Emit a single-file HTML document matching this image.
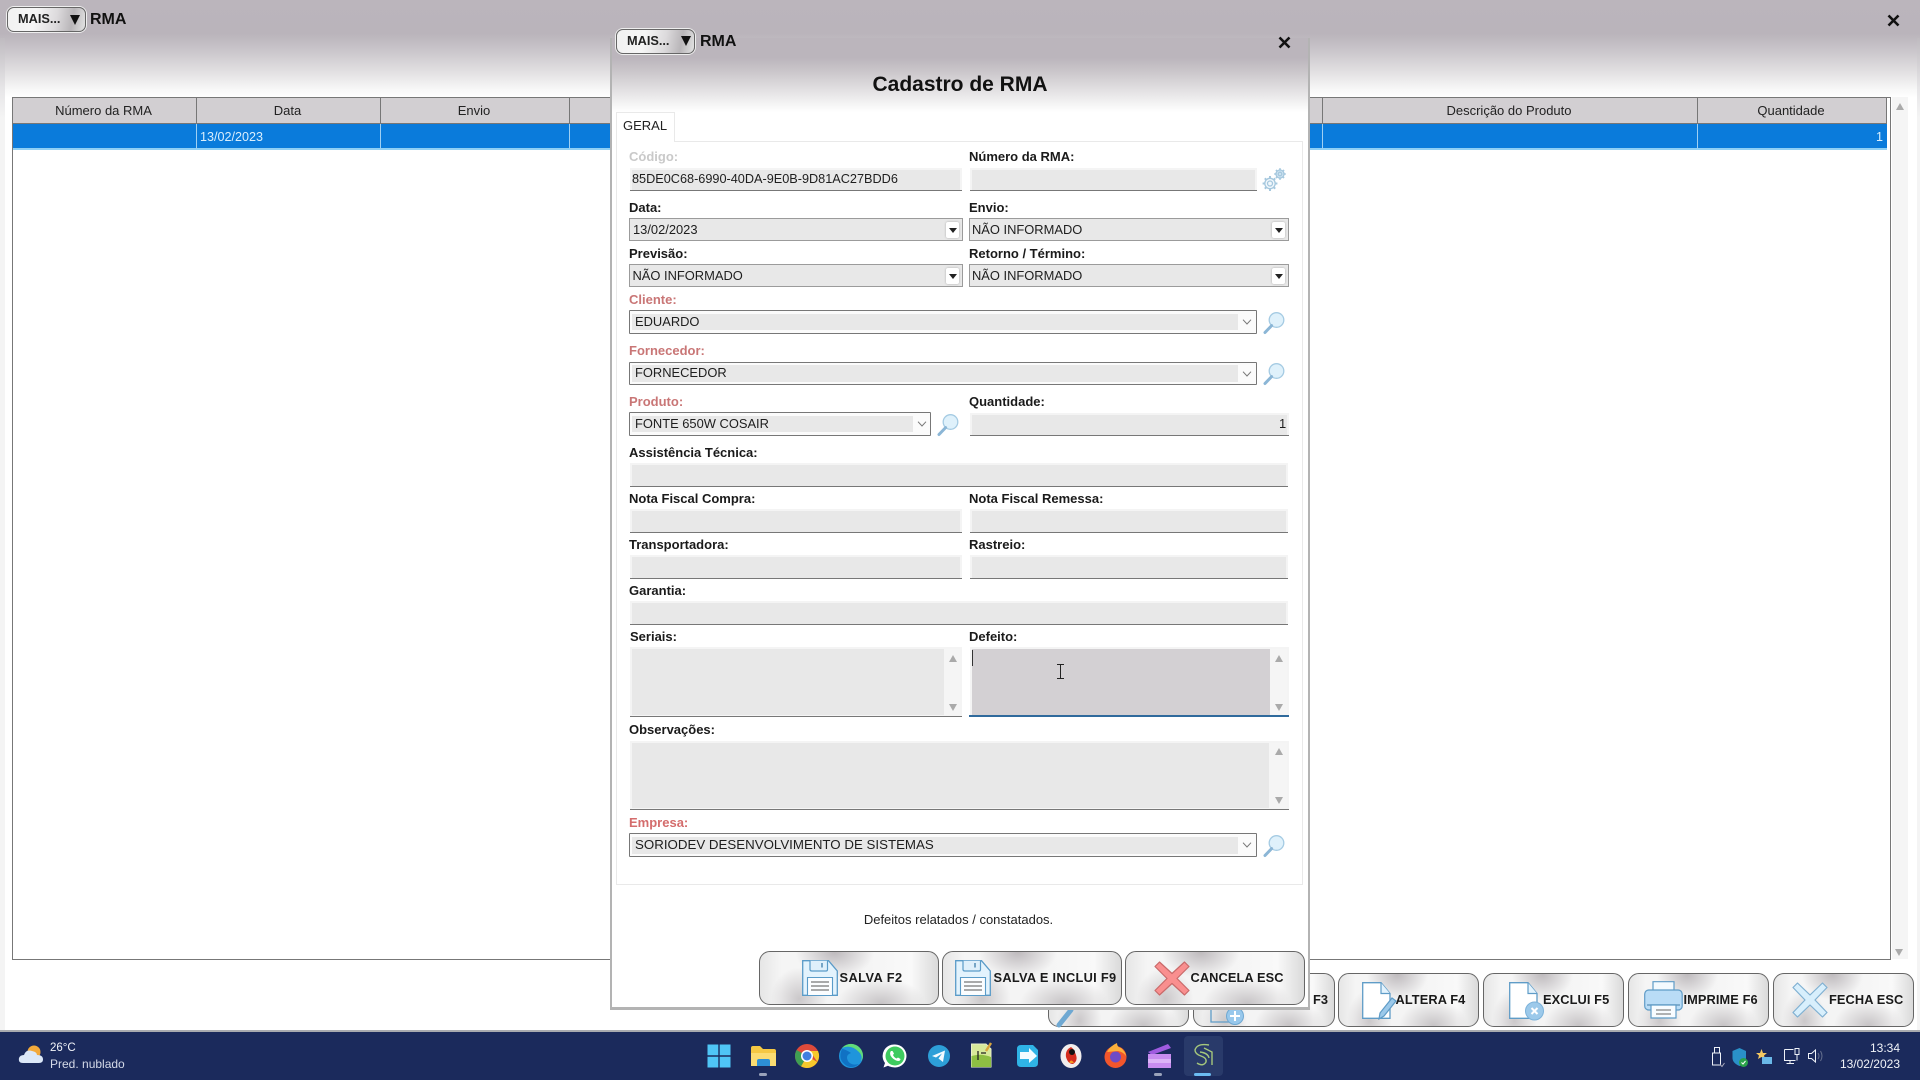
<!DOCTYPE html>
<html lang="pt-BR"><head><meta charset="utf-8"><title>RMA</title>
<style>
*{box-sizing:border-box}
html,body{margin:0;padding:0;width:1920px;height:1080px;overflow:hidden;background:#fff;font-family:"Liberation Sans",sans-serif;color:#111}
div,span{position:absolute}
svg{position:absolute;overflow:visible}
.bgtop{left:0;top:0;width:1920px;height:100px;background:linear-gradient(180deg,#bbb5bc 0,#bab4bb 34px,#c9c5ca 50px,#e2e0e2 72px,#f8f8f8 90px,#fff 98px)}
.side{top:38px;height:992px;background:linear-gradient(180deg,#bfbbc0,#e6e5e7 50px,#f4f4f4 80px)}
.more{border:1px solid #666;border-radius:7px;width:79px;height:25px;background:linear-gradient(100deg,#f1f1f1 0,#f6f6f6 35%,#dcdadc 62%,#b9b6b9 82%,#e3e3e3 100%);box-shadow:0 0 0 1px #eee}
.more b{position:absolute;left:10px;top:4px;font:bold 13px/14px "Liberation Sans",sans-serif;color:#222;transform:scaleX(.98);transform-origin:left}
.more i{position:absolute;left:62px;top:7px;width:0;height:0;border-left:5px solid transparent;border-right:5px solid transparent;border-top:10px solid #111}
.t{white-space:nowrap}
.th{top:97px;height:27px;background:#d2cfd2;border-top:1px solid #777;border-right:1px solid #777;border-bottom:1px solid #777;text-align:center;font-size:13px;line-height:25px;color:#222;white-space:nowrap;padding-right:2px}
.td{top:124px;height:26px;background:#0a7bdb;border-right:1px solid #9fd0f3;border-bottom:2px solid #8fd0f5;color:#d9eefc;font-size:12.6px;line-height:26px;white-space:nowrap}
.l{font-size:13px;font-weight:bold;line-height:16px;color:#1a1a1a;white-space:nowrap}
.red{color:#c97676}.redb{color:#d46c6c}
.i{background:#e8e8e8;border:2px solid #f4f4f4;border-bottom:0}
.i:after{content:"";position:absolute;left:-2px;right:-2px;bottom:0;height:1.5px;background:#777}
.tx{font-size:12.9px;line-height:16px;color:#1e1e1e;white-space:nowrap}
.s{background:#e8e8e8;border:1.5px solid #9b9b9b}
.btnd{width:13px;height:16px;top:2.5px;right:3px;background:#fff;border-radius:2px;box-shadow:0 0 2px #aaa}
.btnd:after{content:"";position:absolute;left:2.5px;top:6px;width:0;height:0;border-left:4px solid transparent;border-right:4px solid transparent;border-top:5px solid #222}
.c{background:#fbfbfb;border:1px solid #777;border-radius:1px}
.c u{position:absolute;left:2px;top:2.5px;bottom:2.5px;background:#e8e8e8;text-decoration:none}
.c svg{top:8px}
.ta{background:#f5f5f5;border:2px solid #f4f4f4;border-bottom:0}
.ta u{position:absolute;left:0;top:0;bottom:2px;background:#e8e8e8}
.ta:after{content:"";position:absolute;left:-2px;right:-2px;bottom:0;height:1.5px;background:#777}
.up,.dn{width:0;height:0;border-left:4px solid transparent;border-right:4px solid transparent}
.up{border-bottom:7px solid #aaa}.dn{border-top:7px solid #aaa}
.b{border:1px solid #666;border-radius:11px;background:radial-gradient(ellipse 22% 50% at 42% 0,#bebabd 0,rgba(190,186,189,0) 100%),radial-gradient(ellipse 25% 50% at 68% 100%,#c6c3c5 0,rgba(198,195,197,0) 100%),radial-gradient(ellipse 16% 60% at 22% 90%,#cbc8ca 0,rgba(203,200,202,0) 100%),linear-gradient(90deg,#e6e6e6 0,#f5f5f5 12%,#f4f4f4 55%,#f9f9f9 85%,#dadada 100%)}
.bt{font-size:12.8px;font-weight:bold;line-height:16px;color:#1a1a1a;white-space:nowrap;letter-spacing:.1px}
.tb{left:0;top:1030px;width:1920px;height:50px;background:#1b2a5c;border-top:2px solid #a9abb0}
.w{color:#f1f3f8;font-size:12px;line-height:15px;white-space:nowrap}
</style></head><body>
<svg width="0" height="0" style="position:absolute"><defs>
<g id="mag"><circle cx="13.5" cy="8" r="7.3" fill="#dff1fb" stroke="#a5cbe3" stroke-width="1.3"/><path d="M8.6 13.6 L2 20.5" stroke="#8bb6d6" stroke-width="3" stroke-linecap="round"/></g>
<g id="flop"><path d="M.7.7H26.5L35.3 11V35.3H.7Z" fill="#e3f3fd" stroke="#5a9bc8" stroke-width="1.3"/><path d="M8 .7V9.5Q8 11 10 11H24Q25.5 11 25.5 9.5V.7" fill="#dff0fb" stroke="#5a9bc8" stroke-width="1.2"/><path d="M20 3V7.5" stroke="#3c7daa" stroke-width="1.3"/><path d="M5.5 35V17.5H30.5V35" fill="#fbfdff" stroke="#5a9bc8" stroke-width="1.1"/><path d="M9 22H27M9 26H27M9 30H27" stroke="#555" stroke-width="1"/></g>
<g id="doc"><path d="M.7.7H19L28 11.5V36.3H.7Z" fill="#fff" stroke="#5f9cc7" stroke-width="1.3"/><path d="M19 .7V11.5H28" fill="#e3f3fd" stroke="#5f9cc7" stroke-width="1.2"/></g>
</defs></svg>

<div class="bgtop"></div><div class="side" style="left:0;width:5px"></div><div class="side" style="left:1917px;width:3px"></div>
<div class="more" style="left:7px;top:7px"><b>MAIS...</b><i></i></div>
<div class="t" style="left:90px;top:11px;font:bold 16px/18px 'Liberation Sans',sans-serif">RMA</div>
<svg style="left:1887px;top:14px" width="13" height="13"><path d="M1.5 1.5L11.5 11.5M11.5 1.5L1.5 11.5" stroke="#111" stroke-width="2.6"/></svg>

<!-- table -->
<div style="left:12px;top:97px;width:1879px;height:863px;border:1px solid #777;background:#fff"></div>
<div class="th" style="left:12px;width:185px;border-left:1px solid #777">Número da RMA</div>
<div class="th" style="left:197px;width:184px">Data</div>
<div class="th" style="left:381px;width:189px">Envio</div>
<div class="th" style="left:570px;width:100px"></div>
<div class="th" style="left:1250px;width:73px"></div>
<div class="th" style="left:1323px;width:375px">Descrição do Produto</div>
<div class="th" style="left:1698px;width:189px;border-right:1px solid #777">Quantidade</div>
<div class="td" style="left:13px;width:184px"></div>
<div class="td" style="left:197px;width:184px;padding-left:3px"><span class="t" style="position:static">13/02/2023</span></div>
<div class="td" style="left:381px;width:189px"></div>
<div class="td" style="left:570px;width:100px"></div>
<div class="td" style="left:1250px;width:73px"></div>
<div class="td" style="left:1323px;width:375px"></div>
<div class="td" style="left:1698px;width:189px;text-align:right;padding-right:4px;border-right:0">1</div>
<div style="left:1892px;top:97px;width:16px;height:862px;background:#f5f5f5"></div>
<div class="up" style="left:1896px;top:103px"></div>
<div class="dn" style="left:1895px;top:949px"></div>

<!-- bottom buttons of main window -->
<div class="b" style="left:1048px;top:973px;width:141px;height:54px"></div>
<svg style="left:1055px;top:1005px" width="25" height="24"><path d="M4 20L16 5" stroke="#6fa8d2" stroke-width="5" stroke-linecap="round"/></svg>
<div class="b" style="left:1193px;top:973px;width:142px;height:54px"></div>
<svg style="left:1210px;top:1005px" width="45" height="20"><path d="M1 0V17H20" fill="none" stroke="#5f9cc7" stroke-width="1.3"/><circle cx="25" cy="11" r="8.5" fill="#98c8ec" stroke="#6fa8d2"/><path d="M25 6V16M20 11H30" stroke="#fff" stroke-width="2"/></svg>
<div class="bt" style="left:1313px;top:992px">F3</div>
<div class="b" style="left:1338px;top:973px;width:141px;height:54px"></div>
<svg style="left:1362px;top:982px" width="36" height="38"><use href="#doc"/><path d="M18 31L30 16L34 19L22 34L17 37Z" fill="#9cc9ea" stroke="#5f9cc7" stroke-width="1.2"/></svg>
<div class="bt" style="left:1395.5px;top:992px">ALTERA F4</div>
<div class="b" style="left:1483px;top:973px;width:141px;height:54px"></div>
<svg style="left:1509px;top:982px" width="36" height="38"><use href="#doc"/><circle cx="25.5" cy="29" r="9" fill="#9cc9ea" stroke="#7cb2da"/><path d="M22.5 26L28.5 32M28.5 26L22.5 32" stroke="#fff" stroke-width="2"/></svg>
<div class="bt" style="left:1543px;top:992px">EXCLUI F5</div>
<div class="b" style="left:1628px;top:973px;width:141px;height:54px"></div>
<svg style="left:1644px;top:981px" width="42" height="40"><path d="M9 .7H30V12H9Z" fill="#f3fafe" stroke="#5f9cc7" stroke-width="1.2"/><rect x=".7" y="9" width="37.5" height="20" rx="4" fill="#b9dcf6" stroke="#5f9cc7" stroke-width="1.2"/><path d="M3 24H36" stroke="#6b9cbf" stroke-width="1.6"/><path d="M7 24H32V37H7Z" fill="#f8fcff" stroke="#5f9cc7" stroke-width="1.2"/><path d="M12 29H27M12 33H27" stroke="#666"/></svg>
<div class="bt" style="left:1683.5px;top:992px">IMPRIME F6</div>
<div class="b" style="left:1773px;top:973px;width:141px;height:54px"></div>
<svg style="left:1792px;top:982px" width="36" height="36"><path d="M5.5 1L18 13L30.5 1L35 5.5L23 18L35 30.5L30.5 35L18 23L5.5 35L1 30.5L13 18L1 5.5Z" fill="#d8effc" stroke="#7fb0d2" stroke-width="1.2" stroke-linejoin="round"/></svg>
<div class="bt" style="left:1829px;top:992px">FECHA ESC</div>

<!-- dialog -->
<div style="left:610px;top:38px;width:700px;height:972px;background:linear-gradient(180deg,#bbb5bc 0,#bbb5bc 20px,#cbc7cb 34px,#e2e0e2 52px,#f7f7f7 68px,#fff 74px);border-left:2px solid #b3b3b3;border-right:2px solid #b3b3b3;border-bottom:3px solid #b3b3b3"></div>
<div class="more" style="left:616px;top:29px"><b>MAIS...</b></div>
<div style="left:680.5px;top:36px;width:0;height:0;border-left:5px solid transparent;border-right:5px solid transparent;border-top:10px solid #111"></div>
<div class="t" style="left:700px;top:33px;font:bold 16px/18px 'Liberation Sans',sans-serif">RMA</div>
<svg style="left:1278px;top:36px" width="13" height="13"><path d="M1.5 1.5L11.5 11.5M11.5 1.5L1.5 11.5" stroke="#111" stroke-width="2.6"/></svg>
<div class="t" style="left:760px;width:400px;top:72px;text-align:center;font:bold 21px/25px 'Liberation Sans',sans-serif;color:#111">Cadastro de RMA</div>

<div style="left:616px;top:141px;width:687px;height:744px;background:#fff;border:1px solid #e9e9e9"></div>
<div style="left:616px;top:112px;width:59px;height:30px;background:#fff;border:1px solid #e9e9e9;border-bottom:0"></div>
<div class="t" style="left:623px;top:118px;font-size:13px;line-height:16px;color:#222">GERAL</div>

<div class="l" style="left:629px;top:149px;color:#c9c9c9">Código:</div>
<div class="l" style="left:969px;top:149px">Número da RMA:</div>
<div class="i" style="left:630px;top:168px;width:332px;height:23px"></div>
<div class="tx" style="left:632px;top:171px;font-size:12.7px">85DE0C68-6990-40DA-9E0B-9D81AC27BDD6</div>
<div class="i" style="left:970px;top:168px;width:287px;height:23px"></div>
<svg style="left:1262px;top:168px" width="24" height="24" fill="none" stroke="#a6c8de" stroke-width="1.3"><circle cx="8" cy="15.5" r="5.2" fill="#f2f8fc"/><circle cx="8" cy="15.5" r="2.5"/><path d="M8 8V10.3M8 20.7V23M.6 15.5H2.8M13.2 15.5H15.4M2.8 10.3L4.3 11.8M11.7 19.2L13.2 20.7M13.2 10.3L11.7 11.8M4.3 19.2L2.8 20.7" stroke-width="2"/><circle cx="18" cy="6" r="4" fill="#cfe4f2"/><circle cx="18" cy="6" r="1.8"/><path d="M18 .3V2M18 10V11.7M12.3 6H14M22 6H23.7M14 2L15.2 3.2M20.8 8.8L22 10M22 2L20.8 3.2M15.2 8.8L14 10" stroke-width="1.8"/></svg>

<div class="l" style="left:629px;top:200px">Data:</div>
<div class="l" style="left:969px;top:200px">Envio:</div>
<div class="s" style="left:629px;top:218px;width:334px;height:23px"><div class="btnd"></div></div>
<div class="tx" style="left:633px;top:221.500px">13/02/2023</div>
<div class="s" style="left:969px;top:218px;width:320px;height:23px"><div class="btnd"></div></div>
<div class="tx" style="left:972px;top:221.500px">NÃO INFORMADO</div>

<div class="l" style="left:629px;top:246px">Previsão:</div>
<div class="l" style="left:969px;top:246px">Retorno / Término:</div>
<div class="s" style="left:629px;top:264px;width:334px;height:23px"><div class="btnd"></div></div>
<div class="tx" style="left:632.5px;top:267.500px">NÃO INFORMADO</div>
<div class="s" style="left:969px;top:264px;width:320px;height:23px"><div class="btnd"></div></div>
<div class="tx" style="left:972px;top:267.500px">NÃO INFORMADO</div>

<div class="l red" style="left:629px;top:292px">Cliente:</div>
<div class="c" style="left:629px;top:310px;width:628px;height:23.5px"><u style="width:606px"></u><svg style="left:612px" width="10" height="6" fill="none" stroke="#777"><path d="M1 .7L5 5L9 .7"/></svg></div>
<div class="tx" style="left:635px;top:313.5px">EDUARDO</div>
<svg style="left:1263px;top:312px" width="24" height="24"><use href="#mag"/></svg>

<div class="l red" style="left:629px;top:343px">Fornecedor:</div>
<div class="c" style="left:629px;top:361.5px;width:628px;height:23.5px"><u style="width:606px"></u><svg style="left:612px" width="10" height="6" fill="none" stroke="#777"><path d="M1 .7L5 5L9 .7"/></svg></div>
<div class="tx" style="left:635px;top:364.5px">FORNECEDOR</div>
<svg style="left:1263px;top:363px" width="24" height="24"><use href="#mag"/></svg>

<div class="l red" style="left:629px;top:394px">Produto:</div>
<div class="l" style="left:969px;top:394px">Quantidade:</div>
<div class="c" style="left:629px;top:412px;width:302px;height:23.5px"><u style="width:281px"></u><svg style="left:287px" width="10" height="6" fill="none" stroke="#777"><path d="M1 .7L5 5L9 .7"/></svg></div>
<div class="tx" style="left:635px;top:415.500px">FONTE 650W COSAIR</div>
<svg style="left:937px;top:414px" width="24" height="24"><use href="#mag"/></svg>
<div class="i" style="left:970px;top:413px;width:319px;height:23px"></div>
<div class="tx" style="left:1279px;top:415.5px">1</div>

<div class="l" style="left:629px;top:444.500px">Assistência Técnica:</div>
<div class="i" style="left:630px;top:463px;width:658px;height:24px"></div>
<div class="l" style="left:629px;top:491px">Nota Fiscal Compra:</div>
<div class="l" style="left:969px;top:491px">Nota Fiscal Remessa:</div>
<div class="i" style="left:630px;top:509px;width:332px;height:24px"></div>
<div class="i" style="left:970px;top:509px;width:318px;height:24px"></div>
<div class="l" style="left:629px;top:537px">Transportadora:</div>
<div class="l" style="left:969px;top:537px">Rastreio:</div>
<div class="i" style="left:630px;top:555px;width:332px;height:24px"></div>
<div class="i" style="left:970px;top:555px;width:318px;height:24px"></div>
<div class="l" style="left:629px;top:583px">Garantia:</div>
<div class="i" style="left:630px;top:601px;width:658px;height:24px"></div>

<div class="l" style="left:630px;top:629px">Seriais:</div>
<div class="l" style="left:969px;top:629px">Defeito:</div>
<div class="ta" style="left:630px;top:647px;width:332px;height:70px"><u style="width:312px"></u></div>
<div class="up" style="left:949px;top:655px"></div><div class="dn" style="left:949px;top:703.500px"></div>
<div class="ta" style="left:970px;top:647px;width:319px;height:70px"><u style="width:298px;background:#d3d0d3"></u></div>
<div style="left:969px;top:714.5px;width:320px;height:2.5px;background:#2f6a9c"></div>
<div class="up" style="left:1275px;top:655px"></div><div class="dn" style="left:1275px;top:703.500px"></div>
<div style="left:972px;top:650px;width:1px;height:16px;background:#333"></div>
<svg style="left:1056px;top:664px" width="9" height="16" fill="none" stroke="#222"><path d="M1 .5H8M4.5 .5V14.5M1 14.5H8"/></svg>

<div class="l" style="left:629px;top:721.500px">Observações:</div>
<div class="ta" style="left:630px;top:741px;width:659px;height:69px"><u style="width:637px"></u></div>
<div class="up" style="left:1275px;top:748px"></div><div class="dn" style="left:1275px;top:796.500px"></div>

<div class="l redb" style="left:629px;top:815px">Empresa:</div>
<div class="c" style="left:629px;top:833px;width:628px;height:24px"><u style="width:606px"></u><svg style="left:612px" width="10" height="6" fill="none" stroke="#777"><path d="M1 .7L5 5L9 .7"/></svg></div>
<div class="tx" style="left:635px;top:836.5px;font-size:13.3px">SORIODEV DESENVOLVIMENTO DE SISTEMAS</div>
<svg style="left:1263px;top:835px" width="24" height="24"><use href="#mag"/></svg>

<div class="t" style="left:760px;width:397px;top:912px;text-align:center;font-size:13px;line-height:16px;color:#222">Defeitos relatados / constatados.</div>

<div class="b" style="left:759px;top:951px;width:180px;height:54px"></div>
<svg style="left:802px;top:960px" width="36" height="36"><use href="#flop"/></svg>
<div class="bt" style="left:839.500px;top:970px;letter-spacing:.45px">SALVA F2</div>
<div class="b" style="left:942px;top:951px;width:180px;height:54px"></div>
<svg style="left:955px;top:960px" width="36" height="36"><use href="#flop"/></svg>
<div class="bt" style="left:993.5px;top:970px;letter-spacing:.3px">SALVA E INCLUI F9</div>
<div class="b" style="left:1125px;top:951px;width:180px;height:54px"></div>
<svg style="left:1154px;top:961px" width="36" height="35"><path d="M5.5 1L18 12.5L30.5 1L35 5.5L23 17.5L35 29.5L30.5 34L18 22.5L5.5 34L1 29.5L13 17.5L1 5.5Z" fill="#f98f8f" stroke="#c96a6a" stroke-width="1.2" stroke-linejoin="round"/></svg>
<div class="bt" style="left:1190.5px;top:970px">CANCELA ESC</div>

<!-- taskbar -->
<div class="tb"></div>
<svg style="left:18px;top:1044px" width="26" height="22"><circle cx="16" cy="8" r="6.5" fill="#f2a93b"/><path d="M5 19Q0 19 1 14Q2 11 6 11Q8 5 14 7Q19 8 19 11Q25 11 25 15.500Q25 19 21 19Z" fill="#dce8f8"/></svg>
<div class="w" style="left:50px;top:1041px;font-size:11.5px">26°C</div>
<div class="w" style="left:50px;top:1057px;color:#d5dae8">Pred. nublado</div>

<svg style="left:707px;top:1044px" width="24" height="24"><path d="M.5.5H11.300V11.300H.5ZM12.700.5H23.500V11.300H12.700ZM.5 12.700H11.300V23.500H.5ZM12.700 12.700H23.500V23.500H12.700Z" fill="#4fc5f6"/></svg>
<svg style="left:751px;top:1044px" width="25" height="24"><path d="M0 4Q0 2 2 2H9L12 5H23Q25 5 25 7V22H0Z" fill="#f5c843"/><path d="M0 9H25V22H0Z" fill="#fbdc72"/><path d="M6 22V17Q6 15 8 15H17Q19 15 19 17V22Z" fill="#2d8fd5"/></svg>
<div style="left:759px;top:1073px;width:8px;height:3px;border-radius:2px;background:#9aa3bb"></div>
<svg style="left:795px;top:1044px" width="24" height="24"><circle cx="12" cy="12" r="12" fill="#de4a3a"/><path d="M12 12L22.400 18A12 12 0 0 1 6 22.400Z" fill="#f7c92c"/><path d="M12 12L6 22.400A12 12 0 0 1 1.600 6Z" fill="#3f9f53"/><path d="M12 7H23A12 12 0 0 1 22.400 18L17 10Z" fill="#f7c92c"/><circle cx="12" cy="12" r="6" fill="#fff"/><circle cx="12" cy="12" r="4.500" fill="#3f7fe0"/></svg>
<svg style="left:839px;top:1044px" width="24" height="24"><circle cx="12" cy="12" r="12" fill="#1f95dc"/><path d="M24 12A12 12 0 0 0 3 4Q12 0 20 8Q24 12 22 17Q24 15 24 12Z" fill="#62dc78"/><path d="M3 5Q-2 16 8 22Q14 25 20 20Q12 22 9 17Q6 11 12 9Q6 5 3 5Z" fill="#1072c4"/></svg>
<svg style="left:883px;top:1044px" width="24" height="24"><path d="M12 .5A11.500 11.500 0 0 1 12 23.500Q8 23.500 5 21.800L.5 23.500L2 19A11.500 11.500 0 0 1 12 .5Z" fill="#fff"/><circle cx="12" cy="12" r="9.500" fill="#3ecb5f"/><path d="M8 7Q6.500 8.500 7.500 11.500Q10 16 15 17Q17.500 17 17.500 15L15 13.500L13.500 14.500Q11 13.500 10 11L11 9.500L9.500 7Z" fill="#fff"/></svg>
<svg style="left:928px;top:1045px" width="22" height="22"><circle cx="11" cy="11" r="11" fill="#2d9fd8"/><path d="M4 11L17 5.500L15 17L10.500 13.500L14 8.500L8 12.500Z" fill="#f3fbff"/></svg>
<svg style="left:971px;top:1043px" width="21" height="25"><path d="M.5 1H15L20 6V24H.5Z" fill="#d8e99a" stroke="#e9efc8"/><path d="M.5 13Q10 10 20 14V24H.5Z" fill="#8ebf43"/><path d="M7 8V17M10 10H15" stroke="#222" stroke-width="1.300"/><path d="M15 8L20 0" stroke="#d9a53d" stroke-width="2.500"/></svg>
<svg style="left:1017px;top:1045px" width="21" height="22"><path d="M4 0H16L21 5V18Q21 22 17 22H4Q0 22 0 18V4Q0 0 4 0Z" fill="#2fb3e6"/><path d="M3 7H12V3L20 11L12 18V14H3Z" fill="#f2fbff"/></svg>
<svg style="left:1060px;top:1044px" width="22" height="24"><ellipse cx="11" cy="12" rx="10.500" ry="12" fill="#f1eded"/><path d="M11 3Q5 6 6 13Q8 20 13 20Q18 17 16 11Q14 5 11 3Z" fill="#d42c1e"/><circle cx="12" cy="8" r="3" fill="#111"/><path d="M9 19Q11 14 14 19Z" fill="#f59a23"/></svg>
<svg style="left:1104px;top:1043px" width="23" height="25"><circle cx="11.500" cy="14" r="11" fill="#f2562c"/><path d="M3 9Q6 3 13 0Q13 4 17 5Q21 8 22.500 14Q20 9 14 8Z" fill="#fbb03b"/><circle cx="11.500" cy="14" r="5.500" fill="#6d4bc5"/></svg>
<svg style="left:1148px;top:1044px" width="23" height="24"><path d="M0 8L20 0L23 4L4 11Z" fill="#a05be0"/><path d="M0 10H23V24H0Z" fill="#c88cf0"/><path d="M0 15H23V19H0Z" fill="#dcb3f7"/></svg>
<div style="left:1154px;top:1073px;width:8px;height:3px;border-radius:2px;background:#9aa3bb"></div>
<div style="left:1184px;top:1036px;width:39px;height:40px;background:#293a6a;border-radius:4px"></div>
<svg style="left:1192px;top:1043px" width="23" height="26" fill="none" stroke="#a5c77c" stroke-width="1.400"><path d="M17 2Q5 0 3 7Q3 11 9 13Q15 15 14 19Q11 24 5 20"/><path d="M12 5L20 9V22M8 9Q16 10 17 15"/></svg>
<div style="left:1194px;top:1073px;width:17px;height:3px;border-radius:2px;background:#6cbcf2"></div>

<svg style="left:1711px;top:1047px" width="14" height="21" fill="none" stroke="#eef1f7" stroke-width="1"><path d="M3.500.5H8.500V6H3.500ZM1.500 6H9.500V18H1.500Z"/><path d="M9 17.500L11 19.500L13.500 16" stroke="#aab"/></svg>
<svg style="left:1732px;top:1048px" width="17" height="20"><path d="M.5 3L7.500 0L14 3V10Q14 15 7.500 18Q.5 15 .5 10Z" fill="#2a91c8"/><circle cx="11.500" cy="14.500" r="4.500" fill="#2aa24a"/><path d="M9.500 14.500L11 16L13.500 13" stroke="#fff" fill="none"/></svg>
<svg style="left:1756px;top:1049px" width="17" height="16"><path d="M5.500 0L7 4H11L8 6.500L9 10L5.500 8L2 10L3 6.500L0 4H4Z" fill="#f4c861"/><path d="M6 8H16V15H6Z" fill="#6ab8e8"/></svg>
<svg style="left:1784px;top:1048px" width="16" height="17" fill="none" stroke="#eef1f7"><path d="M.5 1.500H9.500M.5 1.500V12.500H11.500M6 12.500V15.500M2.500 15.500H10M11 .5H15V6.500H11ZM13 6.500V12.500"/></svg>
<svg style="left:1808px;top:1049px" width="16" height="14" fill="none" stroke="#eef1f7"><path d="M.5 4.500H3.500L7.500 1V13L3.500 9.500H.5Z"/><path d="M10 4Q12 7 10 10M12.500 2Q15.500 7 12.500 12" stroke="#66708f"/></svg>
<div class="w" style="left:1800px;width:100px;top:1041px;text-align:right">13:34</div>
<div class="w" style="left:1800px;width:100px;top:1057px;text-align:right">13/02/2023</div>
</body></html>
